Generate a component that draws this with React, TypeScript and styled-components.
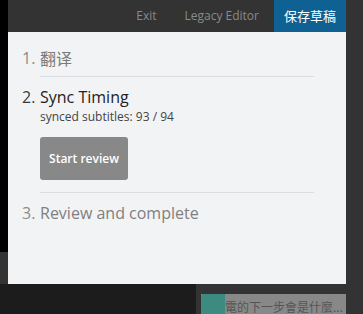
import React from 'react';
import styled, { createGlobalStyle } from 'styled-components';

const Global = createGlobalStyle`
  html, body { margin: 0; padding: 0; background: #333333; }
  body { font-family: "Open Sans", "Noto Sans CJK SC", sans-serif; }
`;

const Screen = styled.div`
  width: 363px;
  height: 314px;
  overflow: hidden;
  display: grid;
  grid-template-rows: 284px 30px;
  background: #333333;
`;

const TopArea = styled.div`
  display: grid;
  grid-template-columns: 8px 338px 17px;
`;

const LeftRail = styled.div`
  display: flex;
  flex-direction: column;
  background: #333333;
`;

const RailBlack = styled.div`
  height: 252px;
  background: #000000;
`;

const Center = styled.div`
  display: grid;
  grid-template-rows: 32px 252px;
`;

const Header = styled.header`
  display: flex;
  justify-content: flex-end;
  align-items: stretch;
  background: #333333;
`;

const NavLink = styled.a`
  display: flex;
  align-items: center;
  padding: 0 14px 1px;
  font-size: 12px;
  color: #8a8a8a;
  text-decoration: none;
  cursor: pointer;
`;

const SaveButton = styled.button`
  width: 72px;
  margin-left: 1px;
  border: 0;
  padding: 0 0 2px;
  background: #106193;
  color: #ffffff;
  font-family: "Noto Sans CJK SC", "Open Sans", sans-serif;
  font-size: 13px;
  cursor: pointer;
`;

const Panel = styled.section`
  background: #f2f3f5;
  padding: 6px 32px 0 14px;
`;

const Steps = styled.ol`
  list-style: none;
  margin: 0;
  padding: 0;
`;

const Step = styled.li<{ $last?: boolean }>`
  padding: 7px 0 0;
  &::after {
    content: "";
    display: ${(p) => (p.$last ? 'none' : 'block')};
    margin: 7px 0 0 18px;
    border-bottom: 1px solid #dcdde0;
  }
`;

const StepTitle = styled.div<{ $active?: boolean }>`
  display: flex;
  font-size: 16px;
  line-height: 24px;
  padding-top: 1px;
  height: 23px;
  color: ${(p) => (p.$active ? '#222222' : '#7f7f7f')};
`;

const StepNum = styled.span<{ $active?: boolean }>`
  width: 18px;
  flex: none;
  color: ${(p) => (p.$active ? '#3a3a3a' : '#8c8c8c')};
`;

const CjkText = styled.span`
  font-family: "Noto Sans CJK SC", sans-serif;
  font-size: 16px;
  color: #7a7a7a;
`;

const StepBody = styled.div`
  padding-left: 18px;
  display: flex;
  flex-direction: column;
  align-items: flex-start;
`;

const Meta = styled.div`
  margin-top: 1px;
  font-size: 12px;
  line-height: 16px;
  color: #444444;
`;

const ReviewButton = styled.button`
  margin: 12px 0 5px;
  width: 88px;
  height: 43px;
  border: 0;
  border-radius: 3px;
  background: #888888;
  color: #ffffff;
  font-family: "Open Sans", sans-serif;
  font-size: 12px;
  font-weight: 600;
  cursor: pointer;
`;

const RightRail = styled.div`
  background: #333333;
`;

const BottomArea = styled.div`
  display: grid;
  grid-template-columns: 196px 1fr;
`;

const BottomLeft = styled.div`
  background: #1c1c1c;
`;

const BottomRight = styled.div`
  background: #333333;
  padding: 10px 17px 0 5px;
`;

const Notice = styled.div`
  display: flex;
  height: 24px;
  background: #888888;
`;

const Swatch = styled.div`
  width: 24px;
  flex: none;
  background: #3d8a80;
  border-radius: 3px 0 0 0;
`;

const NoticeText = styled.span`
  font-family: "Noto Sans CJK TC", sans-serif;
  font-size: 12px;
  line-height: 26px;
  color: #555555;
  white-space: nowrap;
  overflow: hidden;
`;

export default function App() {
  return (
    <>
      <Global />
      <Screen>
        <TopArea>
          <LeftRail>
            <RailBlack />
          </LeftRail>
          <Center>
            <Header>
              <NavLink>Exit</NavLink>
              <NavLink>Legacy Editor</NavLink>
              <SaveButton>保存草稿</SaveButton>
            </Header>
            <Panel>
              <Steps>
                <Step>
                  <StepTitle>
                    <StepNum>1.</StepNum>
                    <CjkText>翻译</CjkText>
                  </StepTitle>
                </Step>
                <Step>
                  <StepTitle $active>
                    <StepNum $active>2.</StepNum>
                    <span>Sync Timing</span>
                  </StepTitle>
                  <StepBody>
                    <Meta>synced subtitles: 93 / 94</Meta>
                    <ReviewButton>Start review</ReviewButton>
                  </StepBody>
                </Step>
                <Step $last>
                  <StepTitle>
                    <StepNum>3.</StepNum>
                    <span>Review and complete</span>
                  </StepTitle>
                </Step>
              </Steps>
            </Panel>
          </Center>
          <RightRail />
        </TopArea>
        <BottomArea>
          <BottomLeft />
          <BottomRight>
            <Notice>
              <Swatch />
              <NoticeText>電的下一步會是什麼...</NoticeText>
            </Notice>
          </BottomRight>
        </BottomArea>
      </Screen>
    </>
  );
}
